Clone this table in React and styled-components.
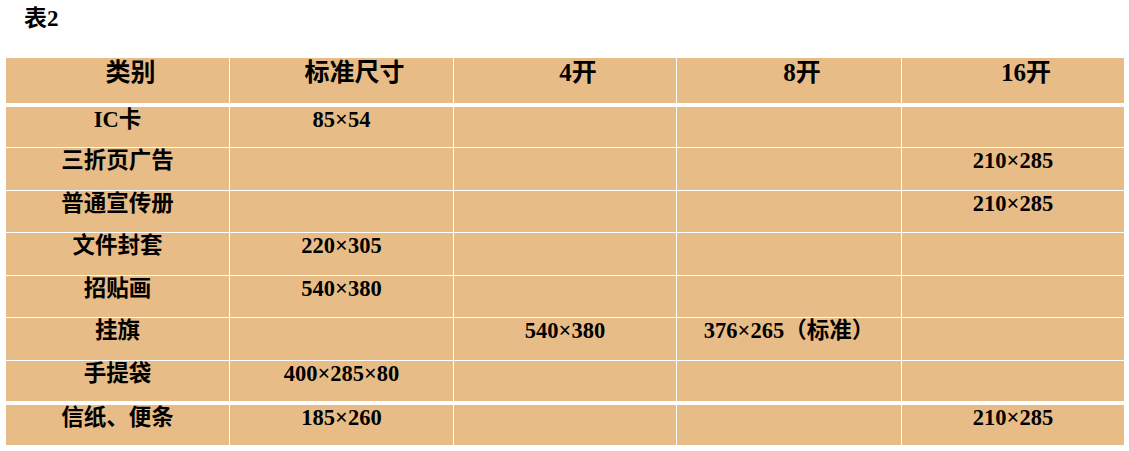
import React from 'react';
import styled, { createGlobalStyle } from 'styled-components';

const GlobalStyle = createGlobalStyle`
  body {
    margin: 0;
    background: #ffffff;
    font-family: 'Liberation Serif', 'Noto Sans CJK SC', serif;
    font-weight: 700;
    color: #000;
  }
`;

const Page = styled.div`
  width: 1129px;
  height: 451px;
  padding: 5px 5px 0 6px;
  box-sizing: border-box;
  overflow: hidden;
`;

const Title = styled.div`
  font-size: 23px;
  line-height: 28px;
  padding-left: 18px;
  margin-bottom: 25px;
`;

const Table = styled.div`
  display: flex;
  flex-direction: column;
  width: 1118px;
`;

const Row = styled.div`
  display: grid;
  grid-template-columns: 223px 223px 222px 224px 222px;
  column-gap: 1px;
  height: ${(p) => p.$h}px;
  margin-top: ${(p) => p.$gap}px;
`;

const Cell = styled.div`
  background: #e8bc87;
  text-align: center;
  font-size: ${(p) => (p.$head ? 25 : 22.5)}px;
  line-height: ${(p) => (p.$head ? 27 : 25)}px;
  padding-top: ${(p) => (p.$head ? 1 : 0)}px;
  padding-left: ${(p) => (p.$head ? 26 : 0)}px;
  white-space: nowrap;
`;

const head = ['类别', '标准尺寸', '4开', '8开', '16开'];

const rows = [
  { h: 40, gap: 4, cells: ['IC卡', '85×54', '', '', ''] },
  { h: 42, gap: 1, cells: ['三折页广告', '', '', '', '210×285'] },
  { h: 41, gap: 1, cells: ['普通宣传册', '', '', '', '210×285'] },
  { h: 42, gap: 1, cells: ['文件封套', '220×305', '', '', ''] },
  { h: 41, gap: 1, cells: ['招贴画', '540×380', '', '', ''] },
  { h: 42, gap: 1, cells: ['挂旗', '', '540×380', '376×265（标准）', ''] },
  { h: 40, gap: 1, cells: ['手提袋', '400×285×80', '', '', ''] },
  { h: 40, gap: 4, cells: ['信纸、便条', '185×260', '', '', '210×285'] },
];

const App = () => {
  return (
    <Page>
      <GlobalStyle />
      <Title>表2</Title>
      <Table>
        <Row $h={45} $gap={0}>
          {head.map((t) => (
            <Cell key={t} $head>
              {t}
            </Cell>
          ))}
        </Row>
        {rows.map((r, i) => (
          <Row key={i} $h={r.h} $gap={r.gap}>
            {r.cells.map((c, j) => (
              <Cell key={j}>{c}</Cell>
            ))}
          </Row>
        ))}
      </Table>
    </Page>
  );
};

export default App;
